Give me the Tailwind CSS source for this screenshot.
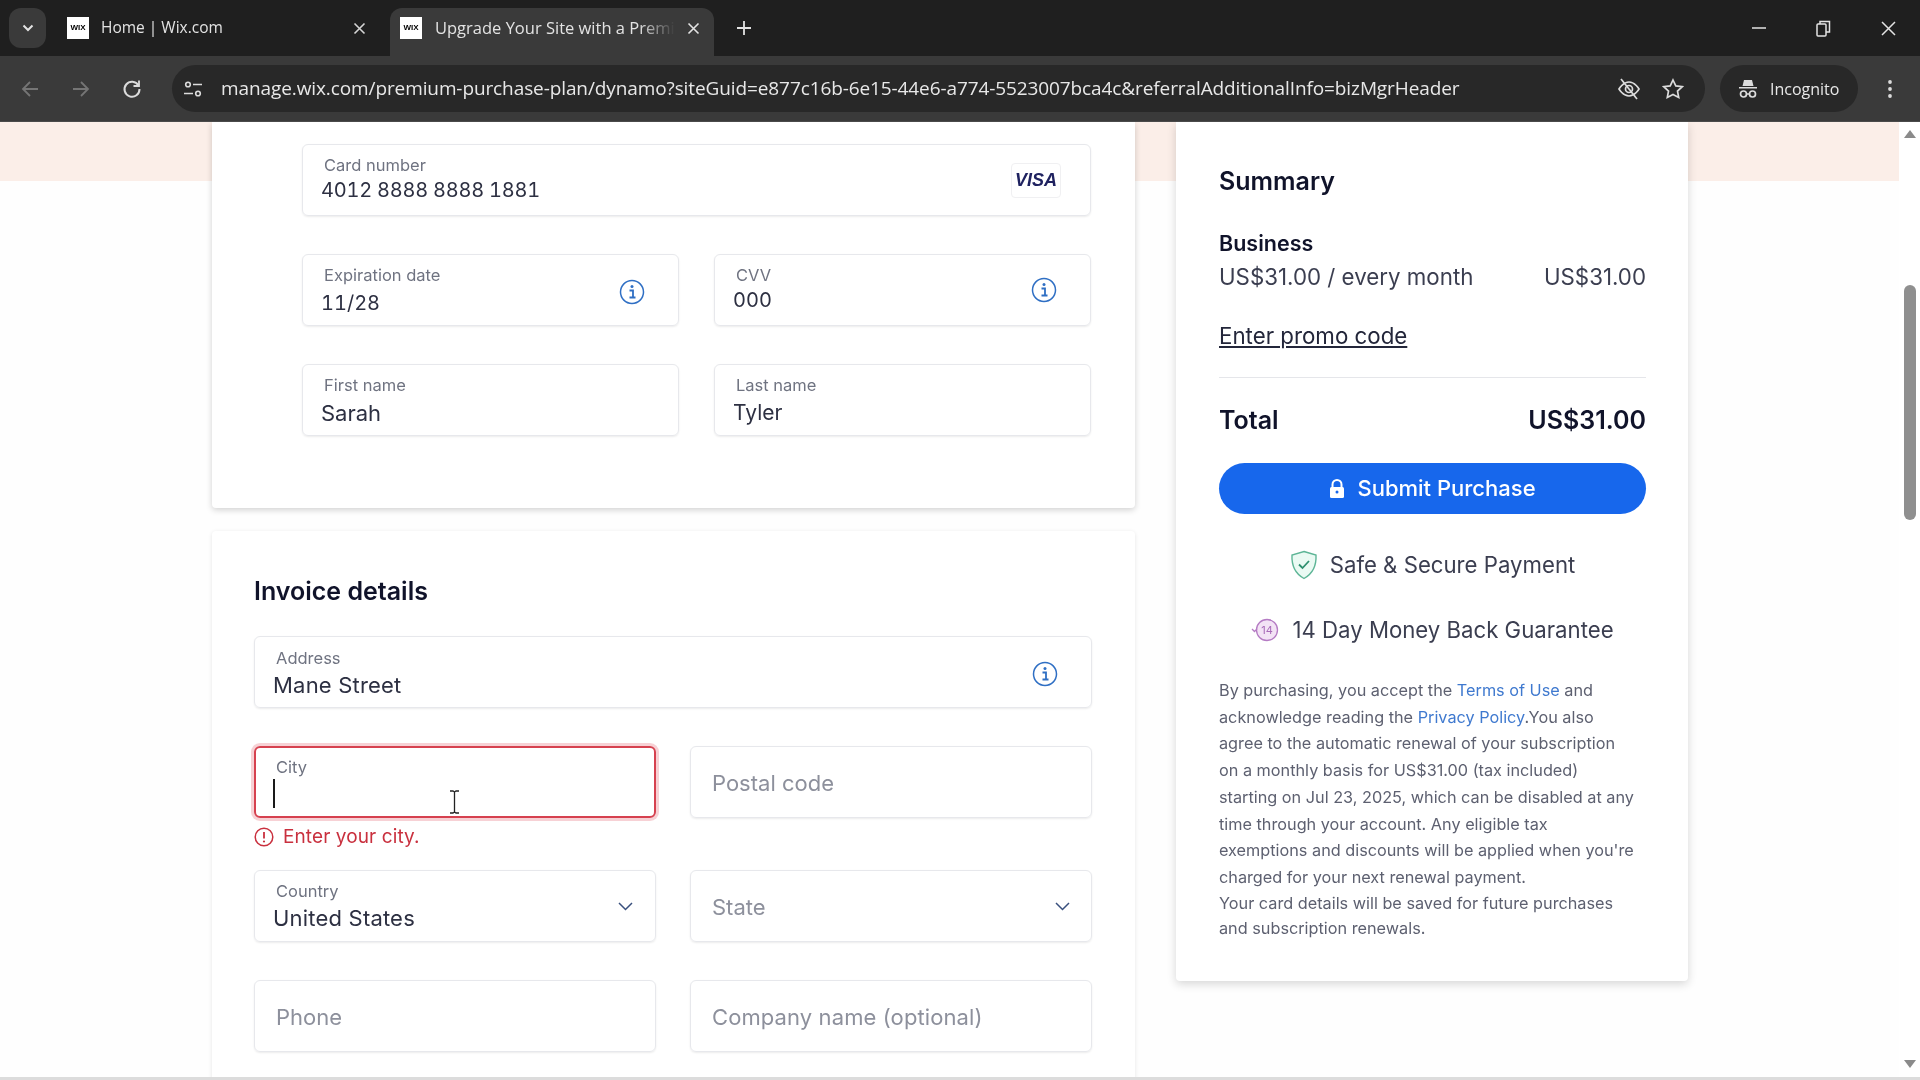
<!DOCTYPE html>
<html lang="en">
<head>
<meta charset="utf-8">
<title>Upgrade Your Site with a Premium Plan</title>
<script src="https://cdn.jsdelivr.net/npm/@tailwindcss/browser@4"></script>
</head>
<body class="w-[1920px] h-[1080px] overflow-hidden bg-white flex flex-col font-['Inter',sans-serif] text-[#2d3042] blur-[0.4px]">

<!-- Tab strip -->
<div class="h-[56px] shrink-0 bg-[#1f1f1f] flex items-start text-[#e3e3e3] font-['Open_Sans',sans-serif] text-[16px]">
  <div class="ml-[9px] mt-[8px] w-[37px] h-[40px] rounded-[12px] bg-[#3a3a3a] flex items-center justify-center">
    <svg width="12" height="8" viewBox="0 0 12 8" fill="none" stroke="#e3e3e3" stroke-width="2"><path d="M1.5 1.5 6 6l4.500-4.500"/></svg>
  </div>
  <div class="ml-[21px] w-[324px] h-[40px] mt-[8px] flex items-center pr-[25px]">
    <div class="w-[22px] h-[22px] bg-white flex items-center justify-center text-[8px] font-bold text-black font-['Liberation_Sans',sans-serif]">WIX</div>
    <span class="ml-[12px] text-[15.500px]">Home | Wix.com</span>
    <svg class="ml-auto" width="13" height="13" viewBox="0 0 13 13" stroke="#d5d5d5" stroke-width="1.600"><path d="M1.500 1.500l10 10M11.500 1.500l-10 10"/></svg>
  </div>
  <div class="ml-[-1px] mt-[8px] w-[324px] h-[48px] bg-[#3a3a3a] rounded-t-[12px] flex items-center pl-[10px] pr-[14px] pb-[8px]">
    <div class="w-[22px] h-[22px] bg-white flex items-center justify-center text-[8px] font-bold text-black font-['Liberation_Sans',sans-serif] shrink-0">WIX</div>
    <span class="ml-[13px] text-[16.500px] whitespace-nowrap [mask-image:linear-gradient(to_right,black_85%,transparent)]">Upgrade Your Site with a Premi</span>
    <svg class="ml-auto shrink-0" width="13" height="13" viewBox="0 0 13 13" stroke="#e3e3e3" stroke-width="1.600"><path d="M1.500 1.500l10 10M11.500 1.500l-10 10"/></svg>
  </div>
  <svg class="ml-[22px] mt-[20px]" width="16" height="16" viewBox="0 0 16 16" stroke="#e3e3e3" stroke-width="1.800"><path d="M8 1v14M1 8h14"/></svg>
  <div class="ml-auto flex items-center h-[56px] pr-[24px] gap-[50px]">
    <svg width="14" height="2" viewBox="0 0 14 2"><path d="M0 1h14" stroke="#e3e3e3" stroke-width="1.500"/></svg>
    <svg width="15" height="17" viewBox="0 0 15 17" fill="none" stroke="#e3e3e3" stroke-width="1.500"><rect x="1" y="4" width="9" height="12" rx="1"/><path d="M4 4V1.500h9.500V12H10"/></svg>
    <svg width="15" height="15" viewBox="0 0 15 15" stroke="#e3e3e3" stroke-width="1.500"><path d="M1 1l13 13M14 1 1 14"/></svg>
  </div>
</div>

<!-- Toolbar -->
<div class="h-[66px] shrink-0 bg-[#3a3a3a] flex items-center pl-[21px] pr-[24px] border-b border-[#4a4a4a]">
  <svg width="18" height="18" viewBox="0 0 18 18" fill="none" stroke="#757575" stroke-width="1.800"><path d="M17 9H2M9 2 2 9l7 7"/></svg>
  <svg class="ml-[33px]" width="18" height="18" viewBox="0 0 18 18" fill="none" stroke="#757575" stroke-width="1.800"><path d="M1 9h15M9 2l7 7-7 7"/></svg>
  <svg class="ml-[32px]" width="20" height="20" viewBox="0 0 20 20" fill="none" stroke="#dcdcdc" stroke-width="2"><path d="M16.500 6.500A7.500 7.500 0 1 0 17.500 10"/><path d="M17 1.500V7h-5.500" stroke-width="1.800"/></svg>
  <div class="ml-[30px] w-[1533px] h-[47px] rounded-full bg-[#282828] flex items-center pl-[11px] pr-[21px] text-[#e8e8e8] font-['Open_Sans',sans-serif] text-[19px]">
    <svg width="20" height="20" viewBox="0 0 20 20" fill="none" stroke="#dcdcdc" stroke-width="1.600"><circle cx="5" cy="5.500" r="2.300"/><path d="M10 5.500h9M1 14.500h9"/><circle cx="15" cy="14.500" r="2.300"/></svg>
    <span class="ml-[18px] whitespace-nowrap tracking-[-0.1px]">manage.wix.com/premium-purchase-plan/dynamo?siteGuid=e877c16b-6e15-44e6-a774-5523007bca4c&amp;referralAdditionalInfo=bizMgrHeader</span>
    <svg class="ml-auto" width="24" height="22" viewBox="0 0 24 22" fill="none" stroke="#dcdcdc" stroke-width="1.700"><path d="M2 11s4-7 10-7 10 7 10 7-4 7-10 7-10-7-10-7z"/><circle cx="12" cy="11" r="3.500"/><path d="M4 1l16 20"/></svg>
    <svg class="ml-[21px]" width="22" height="22" viewBox="0 0 22 22" fill="none" stroke="#dcdcdc" stroke-width="1.700"><path d="M11 2l2.800 5.900 6.400.8-4.700 4.400 1.200 6.400L11 16.400l-5.700 3.100 1.200-6.400L1.800 8.700l6.400-.8z"/></svg>
  </div>
  <div class="ml-[15px] w-[138px] h-[47px] rounded-full bg-[#282828] flex items-center pl-[18px] text-[#e8e8e8] font-['Open_Sans',sans-serif] text-[16px]">
    <svg width="20" height="20" viewBox="0 0 20 20" fill="#dcdcdc"><path d="M6 1h8l1.500 6h-11zM1 8h18v1.500H1z"/><circle cx="5.500" cy="15" r="3" fill="none" stroke="#dcdcdc" stroke-width="1.700"/><circle cx="14.500" cy="15" r="3" fill="none" stroke="#dcdcdc" stroke-width="1.700"/><path d="M8.500 15h3" stroke="#dcdcdc" stroke-width="1.500"/></svg>
    <span class="ml-[12px]">Incognito</span>
  </div>
  <svg class="ml-auto mr-[4px]" width="4" height="18" viewBox="0 0 4 18" fill="#dcdcdc"><circle cx="2" cy="2" r="1.900"/><circle cx="2" cy="9" r="1.900"/><circle cx="2" cy="16" r="1.900"/></svg>
</div>

<!-- Page -->
<div class="relative flex-1 min-h-0 overflow-hidden bg-[#fefefe] flex">
  <div class="absolute left-0 top-0 w-[1899px] h-[59px] bg-[#fbeee8]"></div>

  <div class="relative flex-1 min-w-0 flex items-start pl-[212px] gap-[41px]">
    <!-- Left column -->
    <div class="w-[923px] shrink-0 flex flex-col gap-[23px]">
      <!-- Payment card -->
      <div class="bg-white rounded-b-[4px] shadow-[0_2px_6px_rgba(0,0,0,0.18)] pl-[90px] pr-[44px] pt-[22px] pb-[72px] flex flex-col gap-[38px]">
        <div class="h-[72px] rounded-[6px] border border-[#e7e8ec] shadow-[0_1px_2px_rgba(0,0,0,0.08)] flex items-center pl-[21px] pr-[29px]">
          <div class="flex-1 self-start">
            <div class="pt-[10px] leading-[20px] text-[16.500px] text-[#6f7381]">Card number</div>
            <div class="-ml-[3px] mt-[3px] leading-[24px] text-[20px] tabular-nums tracking-[-0.25px]">4012 8888 8888 1881</div>
          </div>
          <div class="w-[50px] h-[35px] rounded-[4px] border border-[#f0f0f2] flex items-center justify-center text-[18px] font-bold italic text-[#1f2260] font-['Liberation_Sans',sans-serif] pt-[1px]">VISA</div>
        </div>
        <div class="grid grid-cols-2 gap-x-[35px]">
          <div class="h-[72px] rounded-[6px] border border-[#e7e8ec] shadow-[0_1px_2px_rgba(0,0,0,0.08)] flex items-center pl-[21px] pr-[33px]">
            <div class="flex-1 self-start">
              <div class="pt-[10px] leading-[20px] text-[16.500px] text-[#6f7381]">Expiration date</div>
              <div class="-ml-[3px] mt-[6px] leading-[24px] text-[20px] tabular-nums">11/28</div>
            </div>
            <svg class="mt-[3px]" width="26" height="26" viewBox="0 0 26 26" fill="none"><circle cx="13" cy="13" r="11.500" stroke="#2f6fc4" stroke-width="1.500"/><circle cx="13" cy="7.500" r="1.500" fill="#2f6fc4"/><path d="M10.500 11.500H14V18M10.500 18.500h6" stroke="#2f6fc4" stroke-width="1.800"/></svg>
          </div>
          <div class="h-[72px] rounded-[6px] border border-[#e7e8ec] shadow-[0_1px_2px_rgba(0,0,0,0.08)] flex items-center pl-[21px] pr-[33px]">
            <div class="flex-1 self-start">
              <div class="pt-[10px] leading-[20px] text-[16.500px] text-[#6f7381]">CVV</div>
              <div class="-ml-[3px] mt-[3px] leading-[24px] text-[20px] tabular-nums">000</div>
            </div>
            <svg width="26" height="26" viewBox="0 0 26 26" fill="none"><circle cx="13" cy="13" r="11.500" stroke="#2f6fc4" stroke-width="1.500"/><circle cx="13" cy="7.500" r="1.500" fill="#2f6fc4"/><path d="M10.500 11.500H14V18M10.500 18.500h6" stroke="#2f6fc4" stroke-width="1.800"/></svg>
          </div>
        </div>
        <div class="grid grid-cols-2 gap-x-[35px]">
          <div class="h-[72px] rounded-[6px] border border-[#e7e8ec] shadow-[0_1px_2px_rgba(0,0,0,0.08)] pl-[21px]">
            <div class="pt-[10px] leading-[20px] text-[16.500px] text-[#6f7381]">First name</div>
            <div class="-ml-[3px] mt-[6px] leading-[24px] text-[22px]">Sarah</div>
          </div>
          <div class="h-[72px] rounded-[6px] border border-[#e7e8ec] shadow-[0_1px_2px_rgba(0,0,0,0.08)] pl-[21px]">
            <div class="pt-[10px] leading-[20px] text-[16.500px] text-[#6f7381]">Last name</div>
            <div class="-ml-[3px] mt-[6px] leading-[24px] text-[21px]">Tyler</div>
          </div>
        </div>
      </div>

      <!-- Invoice card -->
      <div class="bg-white rounded-[4px] shadow-[0_1px_4px_rgba(0,0,0,0.10)] pl-[42px] pr-[43px] pt-[44px] pb-[60px]">
        <h2 class="leading-[32px] text-[25px] font-semibold text-[#10132a]">Invoice details</h2>
        <div class="mt-[29px] h-[72px] rounded-[6px] border border-[#e7e8ec] shadow-[0_1px_2px_rgba(0,0,0,0.08)] flex items-center pl-[21px] pr-[33px]">
          <div class="flex-1 self-start">
            <div class="pt-[11px] leading-[20px] text-[16.500px] text-[#6f7381]">Address</div>
            <div class="-ml-[3px] mt-[5px] leading-[24px] text-[22px] tracking-[0.2px]">Mane Street</div>
          </div>
          <svg class="mt-[4px]" width="26" height="26" viewBox="0 0 26 26" fill="none"><circle cx="13" cy="13" r="11.500" stroke="#2f6fc4" stroke-width="1.500"/><circle cx="13" cy="7.500" r="1.500" fill="#2f6fc4"/><path d="M10.500 11.500H14V18M10.500 18.500h6" stroke="#2f6fc4" stroke-width="1.800"/></svg>
        </div>
        <div class="mt-[38px] grid grid-cols-2 gap-x-[34px]">
          <div class="h-[124px]">
            <div class="relative h-[72px] rounded-[6px] border-2 border-[#d6414f] shadow-[0_0_0_3px_rgba(224,72,88,0.25)] pl-[20px]">
              <div class="pt-[9px] leading-[20px] text-[16.500px] text-[#6f7381]">City</div>
              <div class="absolute left-[17px] top-[31px] w-[2px] h-[29px] bg-[#1a1a1a]"></div>
              <svg class="absolute left-[193px] top-[42px]" width="11" height="24" viewBox="0 0 11 24" fill="none" stroke="#222" stroke-width="1.300"><path d="M1 1h3l1.500 1L7 1h3M5.500 2v20M1 23h3l1.500-1L7 23h3"/></svg>
            </div>
            <div class="mt-[7px] flex items-center">
              <svg width="20" height="20" viewBox="0 0 20 20" fill="none"><circle cx="10" cy="10" r="8.800" stroke="#c9303e" stroke-width="1.500"/><path d="M10 5v6.500" stroke="#c9303e" stroke-width="1.800"/><circle cx="10" cy="14.500" r="1.100" fill="#c9303e"/></svg>
              <span class="ml-[9px] leading-[24px] text-[19px] tracking-[0.1px] text-[#c9303e]">Enter your city.</span>
            </div>
          </div>
          <div class="h-[72px] rounded-[6px] border border-[#e7e8ec] shadow-[0_1px_2px_rgba(0,0,0,0.08)] pl-[21px] pt-[3px] flex items-center text-[22px] text-[#8d909c]">Postal code</div>
          <div class="h-[72px] rounded-[6px] border border-[#e7e8ec] shadow-[0_1px_2px_rgba(0,0,0,0.08)] flex items-center pl-[21px] pr-[22px]">
            <div class="flex-1 self-start">
              <div class="pt-[10px] leading-[20px] text-[16.500px] text-[#6f7381]">Country</div>
              <div class="-ml-[3px] mt-[5px] leading-[24px] text-[22px] tracking-[0.2px]">United States</div>
            </div>
            <svg width="15" height="9" viewBox="0 0 15 9" fill="none" stroke="#39507e" stroke-width="1.500"><path d="M1 1l6.500 6.500L14 1"/></svg>
          </div>
          <div class="h-[72px] rounded-[6px] border border-[#e7e8ec] shadow-[0_1px_2px_rgba(0,0,0,0.08)] flex items-center justify-between pl-[21px] pr-[21px] text-[22px] text-[#8d909c]">
            <span class="pt-[3px]">State</span>
            <svg width="15" height="9" viewBox="0 0 15 9" fill="none" stroke="#39507e" stroke-width="1.500"><path d="M1 1l6.500 6.500L14 1"/></svg>
          </div>
          <div class="mt-[38px] h-[72px] rounded-[6px] border border-[#e7e8ec] shadow-[0_1px_2px_rgba(0,0,0,0.08)] pl-[21px] pt-[2px] flex items-center text-[22px] text-[#8d909c]">Phone</div>
          <div class="mt-[38px] h-[72px] rounded-[6px] border border-[#e7e8ec] shadow-[0_1px_2px_rgba(0,0,0,0.08)] pl-[21px] pt-[2px] flex items-center text-[22px] tracking-[0.1px] text-[#8d909c]">Company name (optional)</div>
        </div>
      </div>
    </div>

    <!-- Summary -->
    <div class="w-[512px] shrink-0 bg-white rounded-b-[4px] shadow-[0_3px_10px_rgba(0,0,0,0.16)] pl-[43px] pr-[42px] pt-[43px] pb-[39px]">
      <h2 class="leading-[32px] text-[25px] font-semibold text-[#10132a]">Summary</h2>
      <div class="mt-[32px] leading-[28px] text-[21.500px] font-semibold text-[#10132a]">Business</div>
      <div class="mt-[6px] flex justify-between leading-[28px] text-[22.300px] text-[#3b3e50]"><span>US$31.00 / every month</span><span>US$31.00</span></div>
      <div class="mt-[31px] leading-[28px] text-[22.300px] underline underline-offset-2 text-[#23263a]">Enter promo code</div>
      <div class="mt-[27px] h-px bg-[#e5e6ea]"></div>
      <div class="mt-[26px] flex justify-between leading-[32px] text-[25px] font-semibold text-[#10132a]"><span>Total</span><span>US$31.00</span></div>
      <div class="mt-[27px] h-[51px] rounded-full bg-[#1767ec] flex items-center justify-center text-white text-[22px] font-medium">
        <svg width="16" height="20" viewBox="0 0 16 20"><path d="M3.500 9V5.500a4.500 4.500 0 0 1 9 0V9" fill="none" stroke="#fff" stroke-width="2"/><rect x="1" y="8" width="14" height="11" rx="1.500" fill="#fff"/><circle cx="8" cy="13" r="1.500" fill="#1767ec"/></svg>
        <span class="ml-[12px]">Submit Purchase</span>
      </div>
      <div class="mt-[36px] flex items-center justify-center text-[22.200px] text-[#3b3e50] leading-[28px]">
        <svg width="28" height="30" viewBox="0 0 28 30" fill="#eafaf3" stroke="#5db596" stroke-width="1.400"><path d="M14 1.500 26 5c.5 10-2 18-12 23.500C4 23 1.500 15 2 5z"/><path d="M9 14.500l3.500 3.500L19 11" fill="none" stroke="#2e8f6e" stroke-width="1.800"/></svg>
        <span class="ml-[12px]">Safe &amp; Secure Payment</span>
      </div>
      <div class="mt-[36px] flex items-center justify-center text-[22.200px] text-[#3b3e50] leading-[28px]">
        <svg width="28" height="26" viewBox="0 0 28 26" fill="#f3e3f5" stroke="#b57bc4" stroke-width="1.300"><circle cx="16" cy="13" r="10.500"/><path d="M1 12l2.500 2.500L6 12" fill="none"/><text x="16" y="17" text-anchor="middle" font-size="11" font-family="Inter" fill="#a86ab8" stroke="none">14</text></svg>
        <span class="ml-[13px]">14 Day Money Back Guarantee</span>
      </div>
      <p class="mt-[33px] text-[16.250px] leading-[26.700px] text-[#5d6070] whitespace-nowrap">By purchasing, you accept the <span class="text-[#3f79cf]">Terms of Use</span> and<br>acknowledge reading the <span class="text-[#3f79cf]">Privacy Policy</span>.You also<br>agree to the automatic renewal of your subscription<br>on a monthly basis for US$31.00 (tax included)<br>starting on Jul 23, 2025, which can be disabled at any<br>time through your account. Any eligible tax<br>exemptions and discounts will be applied when you're<br>charged for your next renewal payment.</p>
      <p class="text-[16.250px] leading-[25.500px] text-[#5d6070] whitespace-nowrap">Your card details will be saved for future purchases<br>and subscription renewals.</p>
    </div>
  </div>

  <!-- Scrollbar -->
  <div class="w-[21px] shrink-0 flex flex-col items-center pt-[8px] pb-[9px] bg-white z-10">
    <svg width="12" height="8" viewBox="0 0 12 8" fill="#8a8a8a"><path d="M6 0l6 8H0z"/></svg>
    <div class="mt-[147px] w-[12px] h-[235px] rounded-full bg-[#8f8f8f]"></div>
    <svg class="mt-auto" width="12" height="8" viewBox="0 0 12 8" fill="#8a8a8a"><path d="M6 8 0 0h12z"/></svg>
  </div>
</div>
<div class="h-[3px] shrink-0 bg-[#dcdcdc]"></div>
</body>
</html>
